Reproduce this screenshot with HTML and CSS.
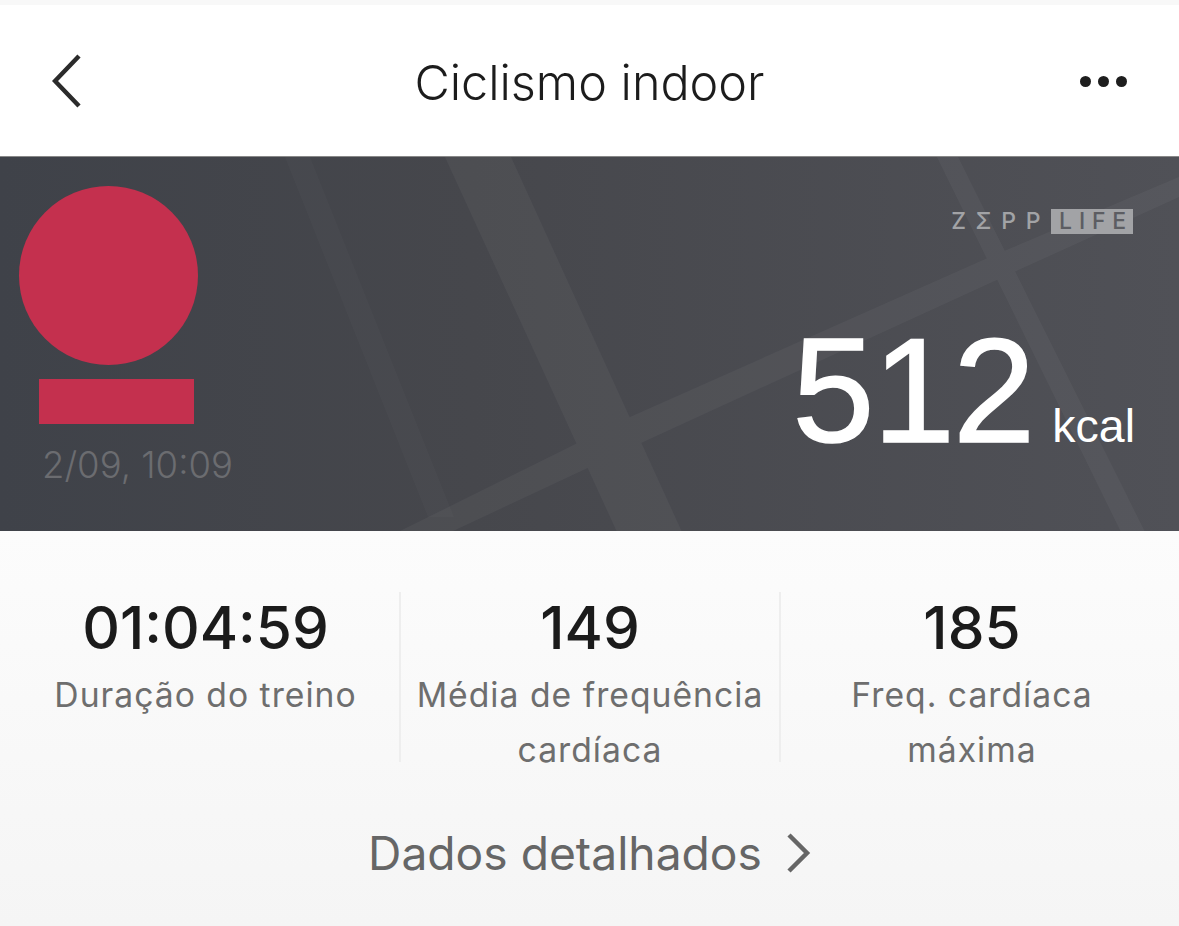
FILE: index.html
```html
<!DOCTYPE html>
<html lang="pt">
<head>
    <meta charset="UTF-8">
    <meta name="viewport" content="width=device-width, initial-scale=1.0">
    <title>Ciclismo indoor</title>
    <link rel="stylesheet" href="styles.css">
</head>
<body>
    <header class="topbar">
        <svg class="back-icon" width="32" height="54" viewBox="0 0 32 54">
            <path d="M27 2 L3 27 L27 52" />
        </svg>
        <h1 class="title">Ciclismo indoor</h1>
        <div class="dots"><span></span><span></span><span></span></div>
    </header>

    <section class="banner">
        <!-- road lines behind the banner -->
        <svg class="roads" width="1179" height="375" viewBox="0 0 1179 375">
            <polygon class="road-faint" points="285,0 310,0 454,360 428,360" />
            <g>
                <polygon points="445,0 511,0 682,375 617,375" />
                <polygon points="937,0 958,0 1145,375 1121,375" />
                <polygon points="1179,20 1179,40 1014,115 641,286 451,375 398,375 630,260 990,100" />
            </g>
        </svg>
        <div class="banner-left">
            <div class="avatar"></div>
            <div class="name-block"></div>
            <p class="date">2/09, 10:09</p>
        </div>
        <div class="banner-right">
            <div class="logo">
                <span class="logo-zepp">ZΣPP</span>
                <span class="logo-life">LIFE</span>
            </div>
            <div class="calories">
                <span class="cal-value">512</span>
                <span class="cal-unit">kcal</span>
            </div>
        </div>
    </section>

    <section class="details">
        <div class="stats">
            <div class="stat">
                <div class="stat-value">01:04:59</div>
                <div class="stat-label">Duração do treino</div>
            </div>
            <div class="stat">
                <div class="stat-value">149</div>
                <div class="stat-label">Média de frequência cardíaca</div>
            </div>
            <div class="stat">
                <div class="stat-value">185</div>
                <div class="stat-label">Freq. cardíaca máxima</div>
            </div>
        </div>
        <div class="more">
            <span>Dados detalhados</span>
            <svg class="more-icon" width="26" height="40" viewBox="0 0 26 40">
                <path d="M4 2 L22 20 L4 38" />
            </svg>
        </div>
    </section>
</body>
</html>
```

FILE: styles.css
```css
* {
    box-sizing: border-box;
}
body {
    margin: 0;
    height: 926px;
    overflow: hidden;
    background-color: #f6f6f6;
    font-family: Inter, "Noto Sans", sans-serif;
    border-top: 5px solid #f8f8f8;
}
.topbar {
    height: 151px;
    background-color: #fff;
    display: flex;
    align-items: center;
    justify-content: space-between;
    padding: 0 52px 0 52px;
    position: relative;
}
.back-icon path {
    fill: none;
    stroke: #2b2b2b;
    stroke-width: 4.5;
}
.title {
    position: absolute;
    left: 0;
    right: 0;
    margin: 0;
    padding-top: 3px;
    text-align: center;
    font-size: 48.5px;
    font-weight: 300;
    color: #1c1c1c;
}
.dots {
    display: flex;
    gap: 7px;
    margin-top: 2px;
}
.dots span {
    width: 11px;
    height: 11px;
    border-radius: 50%;
    background-color: #1e1e1e;
}
.banner {
    height: 375px;
    position: relative;
    display: flex;
    justify-content: space-between;
    background: linear-gradient(90deg, #3f4249 0%, #46474c 40%, #505157 100%);
    border-top: 1px solid #888;
    overflow: hidden;
}
.roads {
    position: absolute;
    left: 0;
    top: 0;
}
.roads g {
    fill: #fff;
    opacity: 0.035;
}
.roads .road-faint {
    fill: #fff;
    opacity: 0.02;
}
.banner-left {
    position: relative;
    padding: 29px 0 0 19px;
}
.avatar {
    width: 179px;
    height: 179px;
    border-radius: 50%;
    background-color: #c4304e;
}
.name-block {
    width: 155px;
    height: 45px;
    margin: 14px 0 0 20px;
    background-color: #c4304e;
}
.date {
    margin: 19px 0 0 23px;
    font-size: 36.5px;
    font-weight: 300;
    color: #6b6c70;
}
.banner-right {
    position: relative;
    display: flex;
    flex-direction: column;
    align-items: flex-end;
    padding: 50px 46px 0 0;
}
.logo {
    display: flex;
    align-items: center;
    gap: 1px;
    font-size: 23px;
    font-weight: 500;
    letter-spacing: 9.7px;
    color: #a2a3a6;
}
.logo-life {
    background-color: #a2a3a6;
    color: #5c5d62;
    padding: 0 0 0 8px;
    line-height: 25px;
    letter-spacing: 6.8px;
}
.calories {
    display: flex;
    align-items: baseline;
    gap: 19px;
    margin: 81px -2px 0 0;
    color: #fff;
    font-family: "Liberation Sans", Arial, sans-serif;
}
.cal-value {
    font-size: 148px;
    line-height: 150px;
    letter-spacing: -2px;
    -webkit-text-stroke: 1.5px #fff;
}
.cal-unit {
    font-size: 46.5px;
}
.details {
    height: 395px;
    background: linear-gradient(180deg, #fcfcfc 0%, #f5f5f5 100%);
    padding-top: 61px;
}
.stats {
    display: grid;
    grid-template-columns: 399px 380px 400px;
}
.stat {
    height: 170px;
    text-align: center;
    padding: 0 12px;
    border-left: 2px solid #eeeeee;
}
.stat:first-child {
    border-left: none;
    padding-left: 12px;
    padding-right: 0;
}
.stat:last-child {
    padding-right: 60px;
    padding-left: 44px;
}
.stat-value {
    font-size: 58.5px;
    font-weight: 500;
    line-height: 72px;
    margin-bottom: 3px;
    color: #1b1b1b;
}
.stat-label {
    font-size: 33.7px;
    line-height: 55px;
    letter-spacing: 1px;
    color: #6e6e6e;
}
.more {
    display: flex;
    justify-content: center;
    align-items: center;
    gap: 23px;
    margin-top: 63px;
    font-size: 46.2px;
    color: #666;
}
.more-icon path {
    fill: none;
    stroke: #666;
    stroke-width: 4.5;
}
```
